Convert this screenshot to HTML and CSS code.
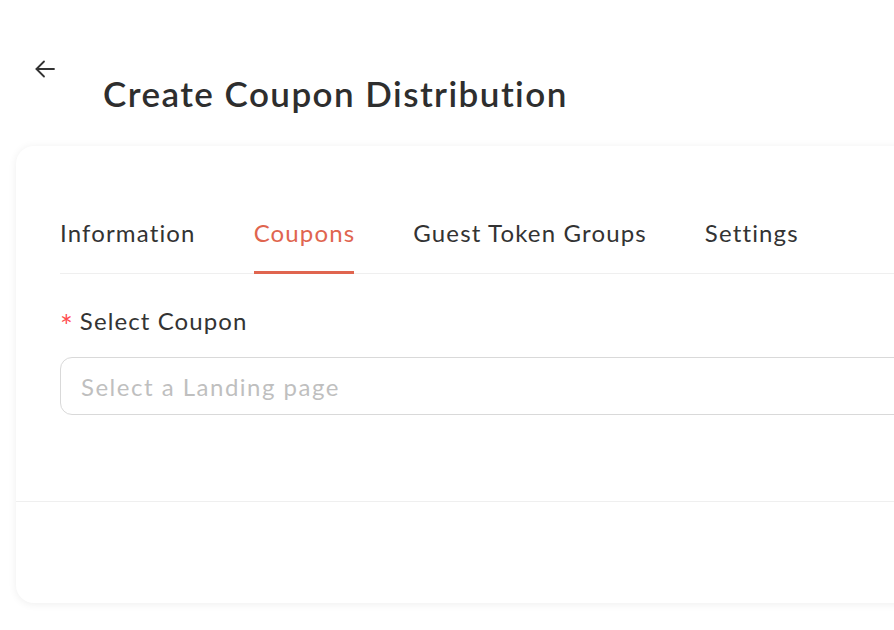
FILE: index.html
```html
<!DOCTYPE html>
<html>
<head>
<meta charset="utf-8">
<link rel="stylesheet" href="styles.css">
</head>
<body>
<div class="page">
  <div class="header">
    <button class="back" aria-label="Back">
      <svg width="24" height="24" viewBox="0 0 24 24" fill="none" stroke="#333" stroke-width="1.8" stroke-linecap="round" stroke-linejoin="round"><path d="M21 12H3.5"/><path d="M11 4.5L3.5 12L11 19.5"/></svg>
    </button>
    <h1 class="title">Create Coupon Distribution</h1>
  </div>
  <div class="card">
    <div class="card-body">
      <div class="tabs">
        <div class="tab">Information</div>
        <div class="tab active">Coupons</div>
        <div class="tab">Guest Token Groups</div>
        <div class="tab">Settings</div>
      </div>
      <div class="form-item">
        <label class="label"><span class="req">*</span>Select Coupon</label>
        <div class="select"><span class="placeholder">Select a Landing page</span></div>
      </div>
    </div>
    <div class="card-footer"></div>
  </div>
</div>
</body>
</html>
```

FILE: styles.css
```css
html, body {
  margin: 0;
  padding: 0;
  background: #ffffff;
  overflow: hidden;
}
body {
  font-family: "Lato", "Noto Sans", sans-serif;
  color: #333333;
}
.page {
  width: 894px;
  height: 630px;
  overflow: hidden;
}
.header {
  display: flex;
  align-items: flex-start;
  padding-left: 33px;
  height: 146px;
}
.back {
  margin-top: 57px;
  padding: 0;
  border: 0;
  background: none;
  width: 24px;
  height: 24px;
  display: flex;
}
.title {
  margin: 72px 0 0 46px;
  font-size: 35px;
  line-height: 42px;
  font-weight: 600;
  color: #2e2e2e;
  letter-spacing: 1.45px;
}
.card {
  margin-left: 16px;
  width: 1000px;
  height: 457px;
  border-radius: 18px;
  background: #fff;
  box-shadow: 0 1px 8px rgba(0, 0, 0, 0.07);
  display: flex;
  flex-direction: column;
}
.card-body {
  padding: 60px 44px 0;
  height: 355px;
  flex: none;
  box-sizing: border-box;
}
.tabs {
  display: flex;
  gap: 58px;
  border-bottom: 1px solid #efefef;
}
.tab {
  font-size: 24px;
  line-height: 32px;
  letter-spacing: 1.15px;
  padding: 11px 0 24px;
  position: relative;
  color: #333;
}
.tab.active {
  color: #e0654f;
}
.tab.active::after {
  content: "";
  position: absolute;
  left: 0;
  right: 1px;
  bottom: -1px;
  height: 3px;
  background: #e0654f;
}
.form-item {
  margin-top: 31px;
}
.label {
  display: flex;
  align-items: flex-start;
  height: 32px;
  font-size: 24px;
  line-height: 32px;
  letter-spacing: 1.1px;
  color: #333;
}
.req {
  color: #ff4d4f;
  margin-right: 6px;
  font-size: 30px;
  line-height: 24px;
  padding-top: 8px;
}
.select {
  margin-top: 20px;
  height: 58px;
  box-sizing: border-box;
  border: 1px solid #d9d9d9;
  border-radius: 12px;
  display: flex;
  align-items: center;
  padding-left: 20px;
}
.placeholder {
  font-size: 24px;
  letter-spacing: 1.5px;
  color: #bfbfbf;
}
.card-footer {
  border-top: 1px solid #efefef;
  flex: 1;
}
```
